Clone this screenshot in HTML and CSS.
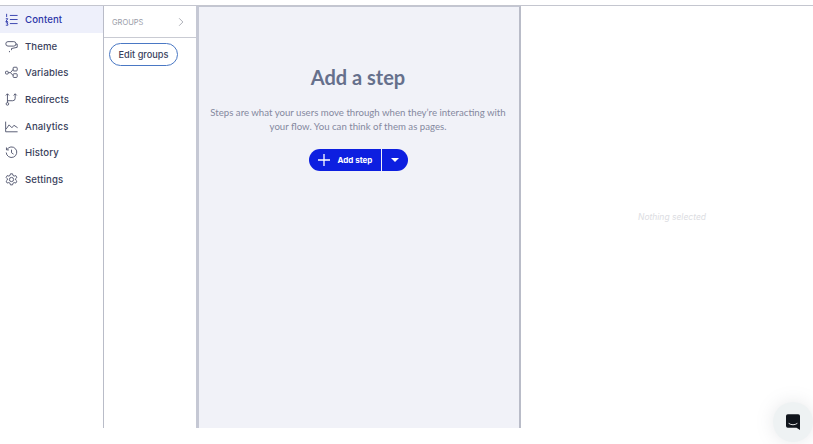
FILE: index.html
```html
<!DOCTYPE html>
<html lang="en">
<head>
    <meta charset="UTF-8">
    <meta name="viewport" content="width=device-width, initial-scale=1.0">
    <title>Content</title>
    <link rel="stylesheet" href="styles.css">
</head>
<body>
    <div class="app">
        <nav class="sidebar">
            <a class="nav-item active">
                <svg viewBox="0 0 16 16"><path d="M6 3h9.500M6 8h9.500M6 13h9.500M2 1v4M1 7h2.400L1 10.500h2.600M1 12h2.600l-1 1.500c1 0 1.200.5 1 1.500H1"/></svg>
                Content
            </a>
            <a class="nav-item">
                <svg viewBox="0 0 16 16"><rect x="1" y="2" width="12.500" height="5.500" rx="2.700"/><path d="M13.500 5h1.500v4l-7 1.500v2M5.500 13.500v1.500"/></svg>
                Theme
            </a>
            <a class="nav-item">
                <svg viewBox="0 0 16 16"><rect x="0.600" y="6.500" width="3.400" height="3.400" rx="1"/><rect x="10" y="1.500" width="5" height="4.600" rx="1"/><rect x="10" y="9.500" width="5" height="4.600" rx="1"/><path d="M4 8.200h2.800l3.200-4M6.800 8.200l3.200 3.600"/></svg>
                Variables
            </a>
            <a class="nav-item">
                <svg viewBox="0 0 16 16"><circle cx="3" cy="13.400" r="1.600"/><path d="M3 11.800V1M1 3l2-2 2 2M3 9.500h6.500a3 3 0 0 0 3-3V1M10.500 3l2-2 2 2"/></svg>
                Redirects
            </a>
            <a class="nav-item">
                <svg viewBox="0 0 16 16"><path d="M.8 2v12.500h14.700M1.500 11l3.500-5 3.500 3.500L11 6.500l4.500 3"/></svg>
                Analytics
            </a>
            <a class="nav-item">
                <svg viewBox="0 0 16 16"><path d="M2.300 4.500A6.500 6.500 0 1 1 1.500 8M1.800 1.800v3h3M8 4.500V8.300l2.500 1.700"/></svg>
                History
            </a>
            <a class="nav-item">
                <svg viewBox="0 0 16 16"><circle cx="8" cy="8" r="2.600"/><path d="M6.700 1h2.600l.5 2 1.500.8 2-.6 1.300 2.300-1.500 1.400v1.800l1.500 1.400-1.300 2.300-2-.6-1.500.8-.5 2H6.700l-.5-2-1.500-.8-2 .6-1.300-2.300 1.500-1.400V7.100L1.400 5.500l1.300-2.300 2 .6 1.500-.8z"/></svg>
                Settings
            </a>
        </nav>

        <aside class="groups">
            <div class="groups-head">
                <span>GROUPS</span>
                <svg class="chevron" viewBox="0 0 8 12"><path d="M1.500 1l5 5-5 5"/></svg>
            </div>
            <button class="edit-groups">Edit groups</button>
        </aside>

        <main class="canvas">
            <h1>Add a step</h1>
            <p>Steps are what your users move through when they’re interacting with your flow. You can think of them as pages.</p>
            <div class="add-step">
                <button class="add-main">
                    <svg viewBox="0 0 12 12"><path d="M6 0v12M0 6h12"/></svg>
                    Add step
                </button>
                <button class="add-more"><span class="caret"></span></button>
            </div>
        </main>

        <section class="details">
            <em>Nothing selected</em>
        </section>
    </div>

    <div class="launcher">
        <svg viewBox="0 0 16 18"><path d="M2 0h12a2 2 0 0 1 2 2v16l-4-2.500H2a2 2 0 0 1-2-2V2a2 2 0 0 1 2-2z"/><path class="smile" d="M3 10.500c3 2.200 7 2.200 10 0"/></svg>
    </div>
</body>
</html>
```

FILE: styles.css
```css
* {
    box-sizing: border-box;
}
html, body {
    height: 100%;
}
body {
    margin: 0;
    padding-top: 5px;
    background: #fff;
    font-family: "Inter", sans-serif;
    overflow: hidden;
}
.app {
    display: flex;
    height: 423px;
    border-top: 1px solid #c4c6cf;
}
.sidebar {
    width: 104px;
    flex: none;
    border-right: 1px solid #b9bcc8;
}
.nav-item {
    display: flex;
    align-items: center;
    gap: 7px;
    height: 26.7px;
    padding-left: 5px;
    font-size: 9.600px;
    font-weight: 500;
    letter-spacing: 0.1px;
    color: #3a3f5c;
}
.nav-item svg {
    width: 13px;
    height: 13px;
    flex: none;
    fill: none;
    stroke: #4a4f68;
    stroke-width: 1.1;
}
.nav-item.active {
    color: #2b35a8;
    background: #eef0fb;
}
.nav-item.active svg {
    stroke: #2b35a8;
}
.groups {
    width: 92px;
    flex: none;
}
.groups-head {
    display: flex;
    align-items: center;
    justify-content: space-between;
    height: 32px;
    padding: 1px 12px 0 8px;
    border-bottom: 1px solid #c9cbd3;
    font-size: 7.500px;
    color: #9a9ca8;
}
.chevron {
    width: 6px;
    height: 10px;
    fill: none;
    stroke: #a5a7b0;
    stroke-width: 1.2;
}
.edit-groups {
    display: block;
    margin: 5px 0 0 5px;
    width: 69px;
    height: 23px;
    padding: 0;
    border: 1.500px solid #4a78c4;
    border-radius: 12px;
    background: #fff;
    font-family: inherit;
    font-size: 9.200px;
    font-weight: 500;
    color: #3a3f5c;
}
.canvas {
    width: 325px;
    flex: none;
    padding-right: 2px;
    border-left: 3px solid #c5c8d4;
    border-right: 2px solid #b9bcc8;
    border-top: 1px solid #c3c6d2;
    background: #f1f2f8;
    text-align: center;
}
.canvas h1 {
    margin: 58px 0 0;
    font-family: "Lato", sans-serif;
    font-size: 20px;
    line-height: 24px;
    font-weight: 700;
    color: #66708c;
}
.canvas p {
    margin: 16px 5px 0;
    font-family: "Lato", sans-serif;
    font-size: 9.650px;
    line-height: 14px;
    color: #85899f;
}
.add-step {
    display: flex;
    justify-content: center;
    gap: 1px;
    margin-top: 16px;
}
.add-step button {
    height: 22px;
    border: 0;
    padding: 0;
    background: #0d1fe0;
    color: #fff;
    font-family: inherit;
}
.add-main {
    display: flex;
    align-items: center;
    width: 72px;
    padding-left: 9px !important;
    gap: 8px;
    border-radius: 11px 0 0 11px;
    font-size: 8px;
    font-weight: 700;
}
.add-main svg {
    width: 12px;
    height: 12px;
    fill: none;
    stroke: #fff;
    stroke-width: 1.300;
}
.add-more {
    display: flex;
    align-items: center;
    justify-content: center;
    width: 26px;
    border-radius: 0 11px 11px 0;
}
.caret {
    width: 0;
    height: 0;
    border-left: 4px solid transparent;
    border-right: 4px solid transparent;
    border-top: 4px solid #fff;
}
.details {
    flex: 1;
    display: flex;
    align-items: center;
    justify-content: center;
}
.details em {
    font-size: 8.500px;
    color: #dcdde2;
    margin-left: 10px;
}
.launcher {
    position: absolute;
    left: 773px;
    top: 402px;
    width: 40px;
    height: 40px;
    border-radius: 50%;
    display: flex;
    align-items: center;
    justify-content: center;
    background: #eef2f3;
    box-shadow: 0 0 18px rgba(120, 130, 140, 0.18);
}
.launcher svg {
    width: 14px;
    height: 16px;
    fill: #10151c;
}
.launcher .smile {
    fill: none;
    stroke: #fff;
    stroke-width: 1;
}
```
